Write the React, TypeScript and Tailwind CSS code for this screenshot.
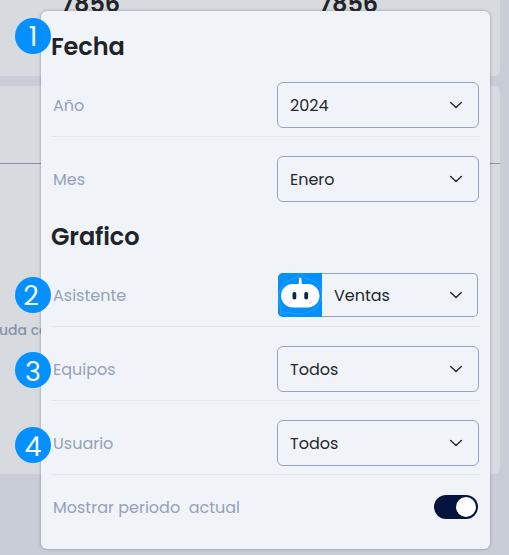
import type { ReactNode } from "react";

function Chevron() {
  return (
    <svg className="mr-[15px] h-2 w-[14px] shrink-0" viewBox="0 0 14 8" fill="none" stroke="#24282d" strokeWidth="1.4" strokeLinecap="round" strokeLinejoin="round">
      <path d="M1.7 1.5 7 6.6l5.3-5.1" />
    </svg>
  );
}

function BotAvatar() {
  return (
    <svg className="h-full w-11 shrink-0" viewBox="0 0 44 44">
      <rect width="44" height="44" fill="#0490ff" />
      <g fill="none" stroke="#58b5ff" strokeWidth=".6" opacity=".7">
        <circle cx="22" cy="3" r="2.6" />
        <path d="M18 5C7 7 1 14 .7 23c0 7 3 11 2 18 6-3 12 0 19 0 14-1 22-9 22-19S37 7 26 5" />
      </g>
      <path d="M21.2 4.8h2l.8 7.2h-3.5Z" fill="#fff" />
      <rect x="3" y="11" width="38.5" height="23.5" rx="11.7" fill="#fff" />
      <rect x="14.5" y="19" width="3.8" height="7.5" rx="1.7" fill="#062c49" />
      <rect x="26.3" y="19" width="3.8" height="7.5" rx="1.7" fill="#062c49" />
      <circle cx="12" cy="29.4" r="2" fill="#ffe1f4" />
      <circle cx="32.2" cy="29.4" r="2" fill="#ffe1f4" />
    </svg>
  );
}

function Select({ value }: { value: ReactNode }) {
  return (
    <button className="mr-px flex h-[46px] w-[202px] items-center justify-between rounded-md border border-[#94a3bd] pl-3 text-left text-base text-[#24282d]">
      <span className="pt-0.5">{value}</span>
      <Chevron />
    </button>
  );
}

function Badge({ n, className }: { n: number; className: string }) {
  return (
    <span className={`absolute left-[15px] flex size-9 items-center justify-center rounded-full bg-[#0490ff] text-[27px] leading-none text-[#f3f8ff] ${className}`}>
      {n}
    </span>
  );
}

const row = "flex h-[74px] items-start justify-between border-b pt-[19px]";
const label = "ml-0.5 flex h-[46px] items-center whitespace-pre pt-0.5 text-base text-[#94a3b8]";

export default function App() {
  return (
    <div className="relative h-[555px] w-[509px] overflow-hidden bg-[#c9cdd8] font-['Poppins','Inter',sans-serif]">
      <div className="flex flex-col gap-2.5 pr-[9px]">
        <section className="h-[76px] rounded-br-md bg-[#d7dbe0]">
          <div className="-mt-2 flex pl-[61px] text-2xl leading-6 font-semibold tracking-[-0.1px] text-[#202327]">
            <span className="w-[258px]">7856</span>
            <span>7856</span>
          </div>
        </section>
        <section className="h-[388px] rounded-r-md bg-[#d7dbe0] pt-[77px]">
          <div className="h-px bg-[#8492a8]" />
          <p className="-ml-px mt-[156px] text-sm leading-5 font-medium whitespace-nowrap text-[#8593aa]">uda con</p>
        </section>
      </div>

      <main className="absolute top-[11px] left-[41px] h-[538px] w-[449px] rounded-md bg-[#f0f4f9] px-2.5 shadow-[0_0_3px_rgba(60,68,85,0.5)]">
        <h2 className="flex h-[52px] items-center pt-5 text-2xl font-semibold tracking-[-0.1px] text-[#202327]">Fecha</h2>
        <div className={`${row} border-[#e1e7ef]`}>
          <span className={label}>Año</span>
          <Select value="2024" />
        </div>
        <div className={`${row} border-transparent`}>
          <span className={label}>Mes</span>
          <Select value="Enero" />
        </div>
        <h2 className="flex h-[42px] items-center pt-2.5 text-2xl font-semibold tracking-[-0.1px] text-[#202327]">Grafico</h2>
        <div className={`${row} border-[#e1e7ef]`}>
          <span className={label}>Asistente</span>
          <button className="mt-px mr-0.5 flex h-11 w-[200px] items-center overflow-hidden rounded-[5px] bg-[#94a3bd] text-left text-base text-[#24282d]">
            <BotAvatar />
            <span className="my-px mr-px flex h-[42px] flex-1 items-center justify-between rounded-r bg-[#f0f4f9] pl-3">
              <span className="pt-0.5">Ventas</span>
              <span className="-mr-px">
                <Chevron />
              </span>
            </span>
          </button>
        </div>
        <div className={`${row} border-[#e1e7ef]`}>
          <span className={label}>Equipos</span>
          <Select value="Todos" />
        </div>
        <div className={`${row} border-[#e1e7ef]`}>
          <span className={label}>Usuario</span>
          <Select value="Todos" />
        </div>
        <div className="flex h-16 items-center justify-between pr-0.5">
          <span className={label}>{"Mostrar periodo  actual"}</span>
          <button role="switch" aria-checked="true" className="flex h-6 w-11 items-center justify-end rounded-full bg-[#04143c] pr-0.5">
            <span className="size-5 rounded-full bg-white" />
          </button>
        </div>
      </main>

      <Badge n={1} className="top-[18px] pt-px" />
      <Badge n={2} className="top-[277px] pt-px pr-1" />
      <Badge n={3} className="top-[352px] pt-0.5" />
      <Badge n={4} className="top-[427px] pt-0.5" />
    </div>
  );
}
